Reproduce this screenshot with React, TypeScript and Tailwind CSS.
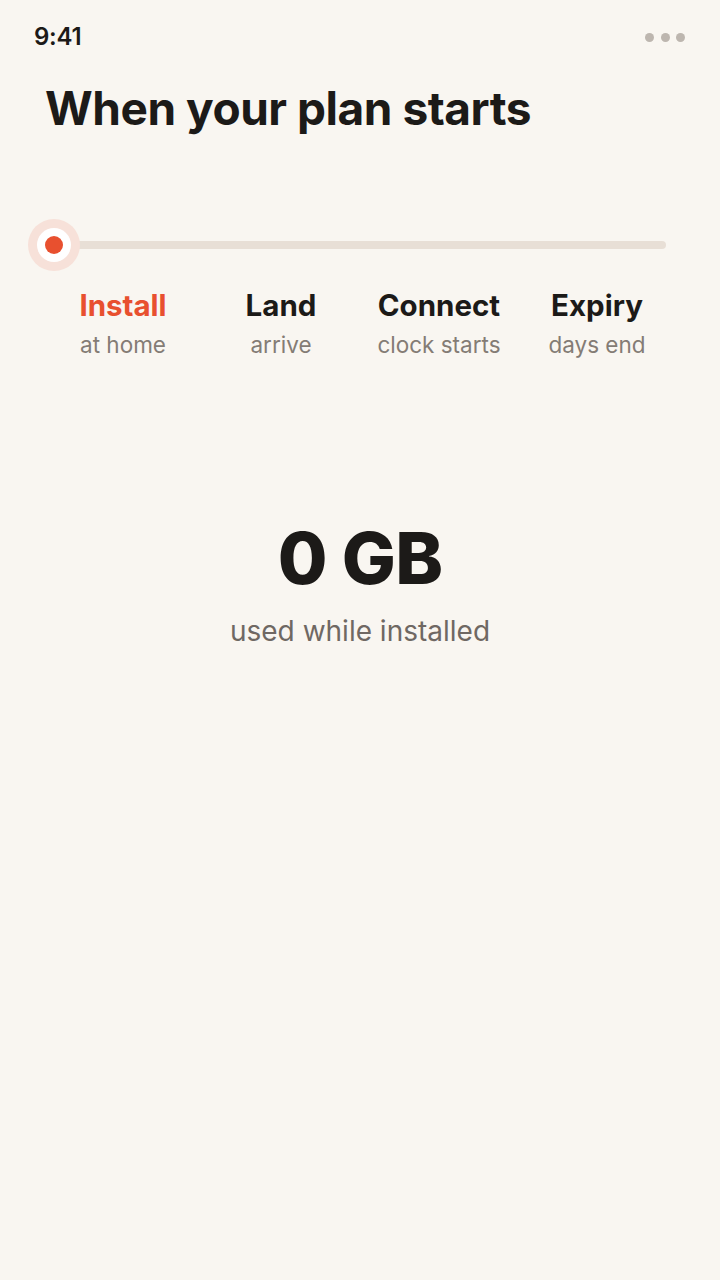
import React from "react";

const steps = [
  { title: "Install", sub: "at home", active: true },
  { title: "Land", sub: "arrive", active: false },
  { title: "Connect", sub: "clock starts", active: false },
  { title: "Expiry", sub: "days end", active: false },
];

export default function App() {
  return (
    <div
      className="w-[720px] h-[1280px] bg-[#f9f6f1] text-[#1c1a18] flex flex-col"
      style={{ fontFamily: "Inter, 'Noto Sans', sans-serif" }}
    >
      {/* status bar */}
      <div className="flex items-center justify-between pl-[34px] pr-[35px] pt-[22px] h-[52px]">
        <span className="text-[24px] font-semibold tracking-[-0.01em] leading-none">9:41</span>
        <div className="flex gap-[6.5px]">
          <span className="w-[9px] h-[9px] rounded-full bg-[#bdb6af]" />
          <span className="w-[9px] h-[9px] rounded-full bg-[#bdb6af]" />
          <span className="w-[9px] h-[9px] rounded-full bg-[#bdb6af]" />
        </div>
      </div>

      {/* title */}
      <h1 className="pl-[45px] mt-[29px] text-[46px] font-bold tracking-[-0.01em] leading-[54px]">
        When your plan starts
      </h1>

      {/* slider */}
      <div className="relative mt-[84px] ml-[28px] mr-[54px] h-[52px] flex items-center">
        <div className="absolute left-[24px] right-0 h-[8px] rounded-full bg-[#e8dfd6]" />
        <div className="relative w-[52px] h-[52px] rounded-full bg-[#f7e1d9] flex items-center justify-center">
          <div className="w-[34px] h-[34px] rounded-full bg-white flex items-center justify-center">
            <div className="w-[18px] h-[18px] rounded-full bg-[#e8502f]" />
          </div>
        </div>
      </div>

      {/* labels */}
      <div className="mx-[44px] mt-[17px] grid grid-cols-4">
        {steps.map((s) => (
          <div key={s.title} className="flex flex-col items-center">
            <span
              className={`text-[29.5px] font-bold tracking-[0em] leading-[34px] ${
                s.active ? "text-[#e8502f]" : "text-[#1c1a18]"
              }`}
            >
              {s.title}
            </span>
            <span className="mt-[8px] text-[22.5px] leading-[30px] text-[#847c75]">{s.sub}</span>
          </div>
        ))}
      </div>

      {/* usage */}
      <div className="mt-[158px] flex flex-col items-center">
        <span className="text-[72px] font-extrabold tracking-[-0.01em] leading-[80px]">0 GB</span>
        <span className="mt-[16px] text-[28px] leading-[34px] text-[#6f6863]">used while installed</span>
      </div>
    </div>
  );
}
